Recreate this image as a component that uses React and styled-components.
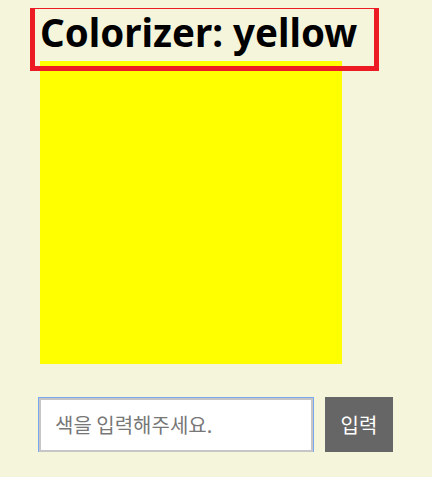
import React, { useState } from "react"
import styled, { createGlobalStyle } from "styled-components"

const GlobalStyle = createGlobalStyle`
    body {
        margin: 8px;
        background-color: #f5f5dc;
        font-family: "Noto Sans CJK KR", "Noto Sans", sans-serif;
    }
`

const Page = styled.div`
    display: flex;
    flex-direction: column;
    align-items: flex-start;
    padding: 1px 0 0 27px;
`

// 제목 (빨간 테두리)
const Title = styled.h1`
    margin: 0;
    padding: 0 0 0 5px;
    width: 334px;
    height: 57px;
    line-height: 46px;
    font-family: "Noto Sans", sans-serif;
    font-size: 38.5px;
    font-weight: bold;
    color: #000;
    outline: 5px solid #ed1c24;
    position: relative;
    z-index: 1;
`

const ColorBox = styled.div`
    width: 302px;
    height: 303px;
    margin: -5px 0 0 5px;
    background-color: ${(props) => props.color};
`

const Form = styled.form`
    display: flex;
    align-items: center;
    gap: 12px;
    margin: 33px 0 0 4px;
`

const Input = styled.input`
    box-sizing: border-box;
    width: 274px;
    height: 54px;
    padding: 0 14px;
    border: 2px solid #c6c6c6;
    outline: none;
    box-shadow: 0 0 0 1px #7aa7ee;
    background: #fff;
    font-family: "Noto Sans CJK KR", sans-serif;
    font-size: 20px;
    color: #222;
    &::placeholder {
        color: #777;
    }
`

const Button = styled.button`
    width: 68px;
    height: 55px;
    border: none;
    background-color: #666666;
    color: #fff;
    font-family: "Noto Sans CJK KR", sans-serif;
    font-size: 20px;
    cursor: pointer;
`

export default function App() {
    const [color, setColor] = useState("yellow")
    const [text, setText] = useState("")

    const handleSubmit = (e) => {
        e.preventDefault()
        if (text) setColor(text)
        setText("")
    }

    return (
        <Page>
            <GlobalStyle />
            <Title>Colorizer: {color}</Title>
            <ColorBox color={color} />
            <Form onSubmit={handleSubmit}>
                <Input
                    autoFocus
                    placeholder="색을 입력해주세요."
                    value={text}
                    onChange={(e) => setText(e.target.value)}
                />
                <Button type="submit">입력</Button>
            </Form>
        </Page>
    )
}
